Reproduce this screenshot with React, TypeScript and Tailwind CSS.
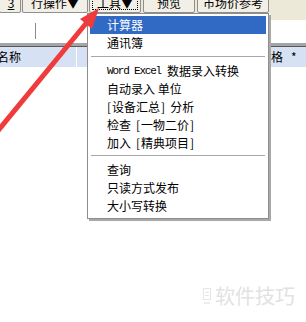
import React from "react";

const cjk = "font-['Noto_Sans_CJK_SC','Noto_Sans',sans-serif]";

function ToolButton({ label, className }: { label: React.ReactNode; className: string }) {
  return (
    <div
      className={
        "h-[21px] shrink-0 flex items-center justify-center bg-[#f1efe6] border border-[#8e8f8f] rounded-[2px] text-[12px] text-black " +
        className
      }
    >
      {label}
    </div>
  );
}

function Item({ children, active }: { children: React.ReactNode; active?: boolean }) {
  return (
    <div
      className={
        "h-[18px] flex items-center pl-[17px] text-[12px] leading-none whitespace-nowrap " +
        (active ? "bg-[#316ac5] text-white" : "text-black")
      }
    >
      {children}
    </div>
  );
}

function Sep({ top }: { top: string }) {
  return (
    <div className={"px-[1px] " + top}>
      <div className="h-[1px] bg-[#a7a6aa]" />
    </div>
  );
}

export default function App() {
  return (
    <div className={"relative w-[306px] h-[322px] overflow-hidden bg-white " + cjk}>
      {/* toolbar */}
      <div className="h-[13px] bg-[#ece9d8] flex items-end">
        <ToolButton className="w-[22px] ml-[-1px]" label={<span className="underline pl-[2px]">3</span>} />
        <ToolButton className="w-[66px] ml-[1px]" label="行操作▼" />
        <div className="h-[21px] w-[52px] ml-[1px] shrink-0 bg-[#f1efe6] border border-[#8e8f8f] rounded-[2px] p-[2px]">
          <div className="h-full border border-dotted border-black flex items-center justify-center text-[12px]">
            工具▼
          </div>
        </div>
        <ToolButton className="w-[52px] ml-[2px]" label="预览" />
        <ToolButton className="w-[72px] ml-[2px]" label="市场价参考" />
      </div>

      {/* input row */}
      <div className="h-[30px] flex">
        <div className="flex-1 pl-[35px] pt-[10px]">
          <div className="w-[1px] h-[16px] bg-[#8a8a8a]" />
        </div>
        <div className="w-[36px]">
          <div className="h-[7px] bg-[#ece9d8]" />
        </div>
      </div>

      {/* grid header */}
      <div className="h-[3px] bg-[#a5a5a5]" />
      <div className="h-[1px] bg-[#5a5a5a]" />
      <div className="h-[20px] bg-[#d6e2f3] flex items-center text-[12px] text-black">
        <div className="w-[80px] ml-[-3px] h-full flex items-center border-r border-white">名称</div>
        <div className="ml-[194px] flex items-center gap-[8px]">
          <span>格</span>
          <span>*</span>
        </div>
      </div>

      {/* dropdown menu */}
      <div className="absolute left-[87px] top-[13px] w-[182px] bg-white border border-[#8d8d8d] shadow-[2px_2px_0_#a9a9a9] px-[2px] pt-[2px] pb-[3px]">
        <Item active>计算器</Item>
        <Item>通讯簿</Item>
        <Sep top="pt-[4px] pb-[5px]" />
        <Item>
          <span className="font-['Liberation_Mono',monospace] text-[11px] tracking-[-1.2px] mr-[1px]">Word Excel</span>
          <span className="ml-[5px]">数据录入转换</span>
        </Item>
        <Item>自动录入 单位</Item>
        <Item>
          <span className="mr-[1px]">[</span>设备汇总<span className="ml-[1px] mr-[5px]">]</span>分析
        </Item>
        <Item>
          检查<span className="ml-[5px] mr-[1px]">[</span>一物二价<span className="ml-[1px]">]</span>
        </Item>
        <Item>
          加入<span className="ml-[5px] mr-[1px]">[</span>精典项目<span className="ml-[1px]">]</span>
        </Item>
        <Sep top="pt-[3px] pb-[5px]" />
        <Item>查询</Item>
        <Item>只读方式发布</Item>
        <Item>大小写转换</Item>
      </div>

      {/* watermark */}
      <div className="absolute left-[203px] top-[286px] flex items-center gap-[4px] pointer-events-none">
        <div className="flex flex-col items-center gap-[2px]">
          <div className="w-[8px] h-[12px] border border-[#e6e6e6] flex flex-col justify-center gap-[2px] px-[1px]">
            <div className="h-[1px] bg-[#e6e6e6]" />
            <div className="h-[1px] bg-[#e6e6e6]" />
          </div>
          <div className="w-[6px] h-[2px] bg-[#ededed]" />
        </div>
        <span className="text-[20px] leading-none text-[#e2e2e2]">软件技巧</span>
      </div>

      {/* red arrow */}
      <svg className="absolute left-0 top-0 pointer-events-none" width="306" height="322" viewBox="0 0 306 322">
        <line x1="-8" y1="138" x2="88" y2="21" stroke="#ef3b3b" strokeWidth="5" strokeLinecap="butt" />
        <polygon points="99,8 80,19 92,29" fill="#ef3b3b" />
      </svg>
    </div>
  );
}
